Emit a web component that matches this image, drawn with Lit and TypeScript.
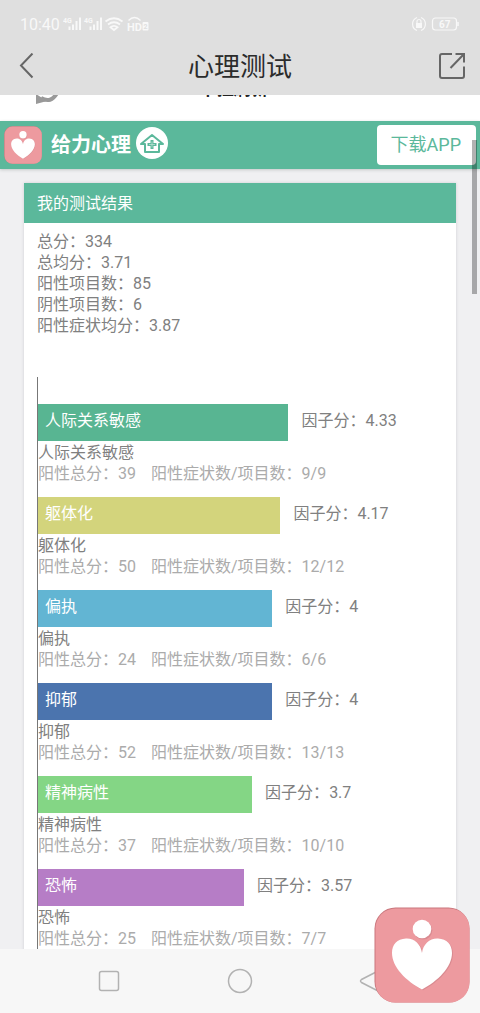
import { LitElement, html, svg, css } from "lit";
import { customElement } from "lit/decorators.js";

interface Factor {
  name: string;
  score: string;
  total: number;
  ratio: string;
  width: number;
  color: string;
}

const summary: [string, string][] = [
  ["总分", "334"],
  ["总均分", "3.71"],
  ["阳性项目数", "85"],
  ["阴性项目数", "6"],
  ["阳性症状均分", "3.87"],
];

const factors: Factor[] = [
  { name: "人际关系敏感", score: "4.33", total: 39, ratio: "9/9", width: 62, color: "#58b592" },
  { name: "躯体化", score: "4.17", total: 50, ratio: "12/12", width: 60, color: "#d3d47c" },
  { name: "偏执", score: "4", total: 24, ratio: "6/6", width: 58, color: "#62b5d3" },
  { name: "抑郁", score: "4", total: 52, ratio: "13/13", width: 58, color: "#4b74ae" },
  { name: "精神病性", score: "3.7", total: 37, ratio: "10/10", width: 53, color: "#84d685" },
  { name: "恐怖", score: "3.57", total: 25, ratio: "7/7", width: 51, color: "#b67dc6" },
];

@customElement("heart-logo")
class HeartLogo extends LitElement {
  static styles = css`
    :host { display: block; }
    .logo { display: block; width: 100%; height: 100%; }
  `;
  render() {
    return html`<svg class="logo" viewBox="0 0 96 96" aria-hidden="true">
      <rect x="0.5" y="0.5" width="95" height="95" rx="21" fill="#c9777d" />
      <rect x="1.5" y="1.5" width="94" height="94" rx="20" fill="#ed9a9f" />
      <g fill="#d98a90" transform="translate(1 0.8)">
        <circle cx="48" cy="22.500" r="9.300" />
        <path d="M48 46C47 37 40 31 32 31.500C23 32 18 37.500 18 46C18 60 32 74 48 82.500C64 74 78 60 78 46C78 37.500 73 32 64 31.500C56 31 49 37 48 46Z" />
      </g>
      <g fill="#fff">
        <circle cx="48" cy="22" r="9.300" />
        <path d="M48 46C47 37 40 31 32 31.500C23 32 18 37.500 18 46C18 60 32 74 48 82.500C64 74 78 60 78 46C78 37.500 73 32 64 31.500C56 31 49 37 48 46Z" />
      </g>
    </svg>`;
  }
}

const signal = (x: number) => svg`
  <g transform="translate(${x} 0)">
    <path d="M6.500 14V10.500M10 14V8.500M13.500 14V5M17 14V1.500" stroke="#f8f8f8" stroke-width="2" />
    <text x="0" y="6.500" font-size="7" font-weight="700" fill="#f8f8f8">4G</text>
  </g>`;

@customElement("app-root")
class AppRoot extends LitElement {
  static styles = css`
    :host {
      display: flex;
      flex-direction: column;
      height: 100vh;
      overflow: hidden;
      position: relative;
      background: #f0f0f2;
      color: #808080;
      font: 16px/21px Roboto, "Noto Sans CJK SC", sans-serif;
    }
    .top { background: #dfdfdf; flex: none; height: 95px; }
    .status { display: flex; justify-content: space-between; align-items: center; height: 48px; padding: 0 20px; color: #f8f8f8; }
    .status-side { display: flex; align-items: center; gap: 3px; }
    .status svg { display: block; }
    .titlebar { display: grid; grid-template-columns: 32px 1fr 32px; align-items: center; padding: 0 12px; }
    .title { margin: 0; font-size: 26px; line-height: 38px; font-weight: 400; color: #2b2b2b; text-align: center; }
    .icon-button { border: 0; padding: 0; background: none; display: grid; place-items: center; height: 32px; }
    .refresh { flex: none; height: 26px; background: #fff; overflow: hidden; display: grid; grid-template-columns: 1fr auto 1fr; }
    .refresh-icon { margin: -18px 0 0 34px; }
    .refresh-text { margin-top: -16px; font-size: 17px; line-height: 20px; font-weight: 700; color: #222; }
    .brand { flex: none; display: flex; align-items: center; height: 48px; padding: 0 4px; background: #5bb89b; box-shadow: 0 1px 3px #c4c8c8; z-index: 1; box-sizing: border-box; }
    .brand-logo { width: 38px; height: 38px; }
    .brand-name { margin: 0 5px 0 9px; font-size: 20px; line-height: 28px; font-weight: 700; color: #fff; }
    .brand-home { display: block; width: 32px; height: 32px; margin-bottom: 4px; }
    .download { margin-left: auto; padding: 0 15px 0 14px; height: 40px; line-height: 40px; border-radius: 4px; background: #fff; color: #5bb89b; font-size: 18px; text-decoration: none; }
    .page { flex: 1; min-height: 0; overflow: hidden; padding: 14px 24px 0; }
    .card { background: #fff; box-shadow: 0 0 3px #cdcdd2; }
    .card-title { margin: 0; padding: 2px 13px 0; background: #5bb89b; color: #fff; font-size: 16px; line-height: 38px; font-weight: 400; }
    .card-body { padding: 8px 14px 40px 13px; }
    .summary { list-style: none; margin: 0 0 41px; padding: 0; }
    .chart { list-style: none; margin: 0; padding: 27px 0 0; border-left: 1px solid #777; display: grid; gap: 13px; }
    .row { display: flex; gap: 13px; height: 37px; margin-bottom: 1px; }
    .bar { box-sizing: border-box; padding: 6px 7px; color: #fff; flex: none; }
    .score { padding-top: 6px; }
    .detail { display: flex; gap: 15px; color: #ababab; }
    .nav { flex: none; height: 64px; background: #f7f7f7; display: grid; grid-template-columns: repeat(3, 131px); justify-content: center; align-items: center; }
    .nav-button { border: 0; padding: 0; background: none; display: grid; place-items: center; }
    .scroll-thumb { position: absolute; z-index: 2; right: 3px; top: 140px; width: 5px; height: 154px; background: rgba(0, 0, 0, 0.3); }
    .float { position: absolute; z-index: 2; right: 10px; bottom: 10px; width: 96px; height: 96px; }
  `;

  render() {
    return html`
      <header class="top">
        <div class="status">
          <div class="status-side">
            <span>10:40</span>
            <svg width="92" height="16" viewBox="0 0 92 16" fill="none" font-family="Roboto">
              ${signal(0)}${signal(21)}
              <path d="M42.500 5.500Q51 -1 59.500 5.500M45 8.500Q51 4 57 8.500M47.500 11.200Q51 8.500 54.500 11.200L51 14Z" stroke="#f8f8f8" stroke-width="1.800" />
              <path d="M65.500 4.500Q71.500 -1.500 77.500 4.500" stroke="#f8f8f8" stroke-width="1.500" />
              <text x="64" y="14.500" font-size="11" font-weight="700" fill="#f8f8f8">HD</text>
              <rect x="79.500" y="6" width="6" height="8.500" rx="1" fill="#f8f8f8" />
              <text x="80.500" y="13" font-size="7" font-weight="700" fill="#dfdfdf">2</text>
            </svg>
          </div>
          <svg width="48" height="16" viewBox="0 0 48 16" fill="none" stroke="#f8f8f8" font-family="Roboto">
            <path d="M5 1.500A7 7 0 0 0 5 14.500M9 1.500A7 7 0 0 1 9 14.500" stroke-width="1.200" />
            <rect x="4" y="7" width="6" height="5" fill="#f8f8f8" stroke="none" />
            <path d="M5 7V5.500A2 2 0 0 1 9 5.500V7" stroke-width="1.200" />
            <rect x="20.500" y="2" width="24" height="12" rx="3" stroke-width="1.200" />
            <path d="M46 6V10" stroke-width="1.500" />
            <text x="27" y="11.500" font-size="10" font-weight="700" fill="#f8f8f8" stroke="none">67</text>
          </svg>
        </div>
        <div class="titlebar">
          <button class="icon-button" aria-label="返回">
            <svg width="26" height="28" viewBox="0 0 26 28" fill="none" stroke="#666" stroke-width="2"><path d="M17.500 0.500L6 12.500L17.500 24.500" /></svg>
          </button>
          <h1 class="title">心理测试</h1>
          <button class="icon-button" aria-label="分享">
            <svg width="28" height="28" viewBox="0 0 28 28" fill="none" stroke="#666" stroke-width="2"><path d="M14 1H4Q2 1 2 3V23Q2 25 4 25H24Q26 25 26 23V13.500M17.500 1H26V9.500M26 1L12.500 15" /></svg>
          </button>
        </div>
      </header>
      <div class="refresh">
        <svg class="refresh-icon" width="28" height="28" viewBox="0 0 28 28" fill="none"><path d="M3 12A11 11 0 0 1 21 5M23 16Q17 27 7 21" stroke="#999" stroke-width="4" /><path d="M2 17V27L13 24Z" fill="#999" /></svg>
        <span class="refresh-text">下拉刷新…</span>
      </div>
      <div class="brand">
        <heart-logo class="brand-logo"></heart-logo>
        <h2 class="brand-name">给力心理</h2>
        <svg class="brand-home" viewBox="0 0 32 32" fill="none"><circle cx="16" cy="16" r="16" fill="#fff" /><path d="M16 8L5 17H9V25H23V17H27Z" stroke="#5bb89b" stroke-width="2" stroke-linejoin="round" /><path d="M16 13V22M11.500 17.500H20.500" stroke="#5bb89b" stroke-width="3" /><path d="M16 14.500V20.500M13 17.500H19" stroke="#b9e0d3" stroke-width="0.800" /></svg>
        <a class="download" href="#">下载APP</a>
      </div>
      <main class="page">
        <section class="card">
          <h3 class="card-title">我的测试结果</h3>
          <div class="card-body">
            <ul class="summary">
              ${summary.map(([k, v]) => html`<li>${k}：${v}</li>`)}
            </ul>
            <ul class="chart">
              ${factors.map((f) => html`
                <li>
                  <div class="row">
                    <div class="bar" style="width:${f.width}%;background:${f.color}">${f.name}</div>
                    <div class="score">因子分：${f.score}</div>
                  </div>
                  <div>${f.name}</div>
                  <div class="detail"><span>阳性总分：${f.total}</span><span>阳性症状数/项目数：${f.ratio}</span></div>
                </li>`)}
            </ul>
          </div>
        </section>
      </main>
      <nav class="nav">
        <button class="nav-button" aria-label="最近任务"><svg width="26" height="26" fill="none" stroke="#b2b2b2" stroke-width="1.500"><rect x="3.500" y="3.500" width="19" height="19" rx="2" /></svg></button>
        <button class="nav-button" aria-label="主页"><svg width="26" height="26" fill="none" stroke="#b2b2b2" stroke-width="1.500"><circle cx="13" cy="13" r="11.500" /></svg></button>
        <button class="nav-button" aria-label="后退"><svg width="26" height="26" fill="none" stroke="#b2b2b2" stroke-width="1.500"><path d="M21 2.500L3.500 11.500Q1.500 13 3.500 14.500L21 23.500Z" /></svg></button>
      </nav>
      <div class="scroll-thumb"></div>
      <heart-logo class="float"></heart-logo>
    `;
  }
}
